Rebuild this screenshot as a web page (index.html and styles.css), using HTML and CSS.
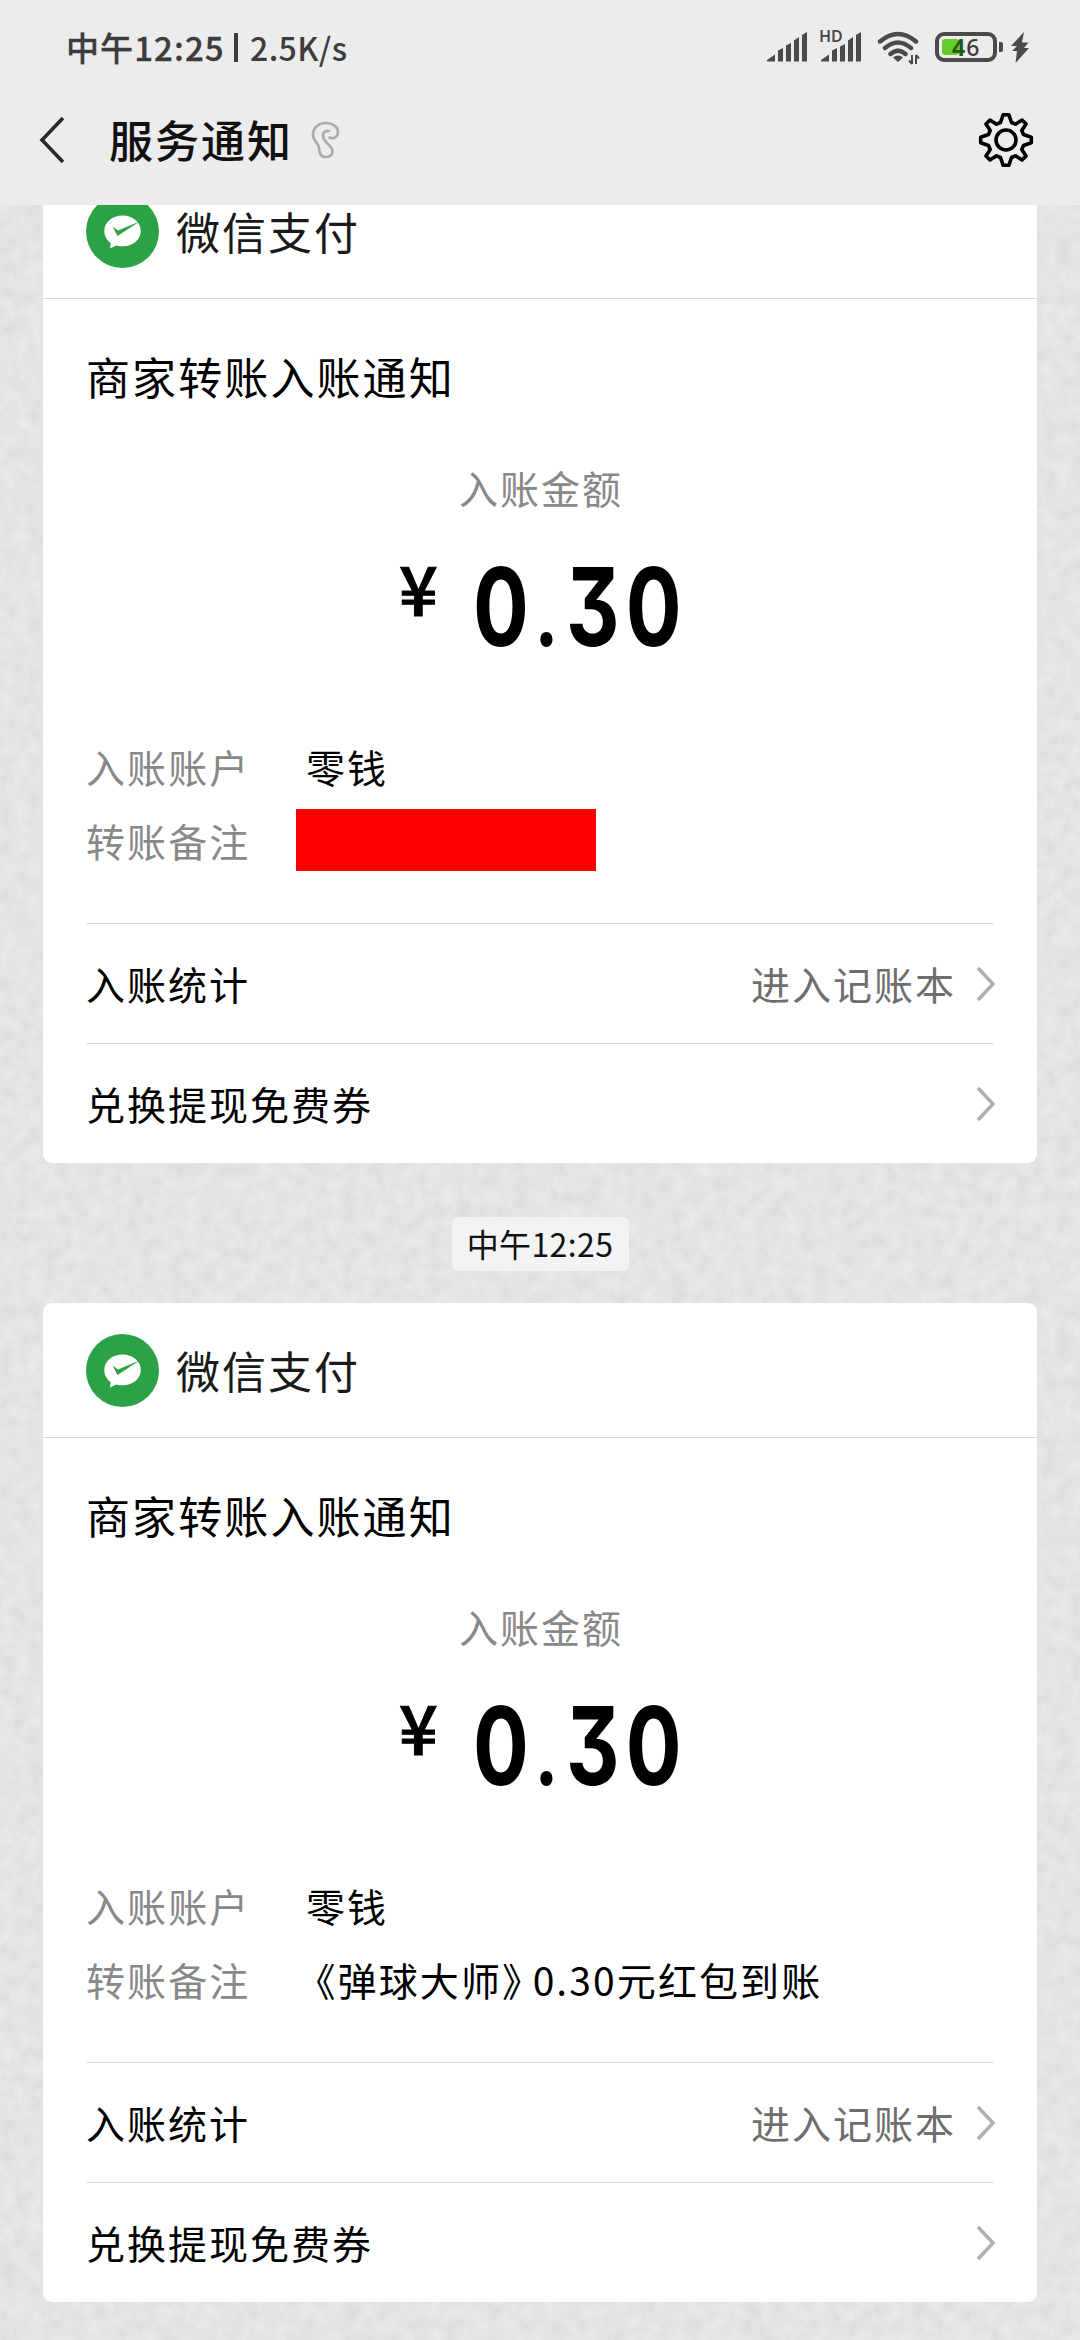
FILE: index.html
```html
<!DOCTYPE html>
<html lang="zh-CN">
<head>
<meta charset="utf-8">
<title>服务通知</title>
<link rel="stylesheet" href="styles.css">
</head>
<body>
<svg class="defs" width="0" height="0">
  <symbol id="pay" viewBox="0 0 73 73">
    <circle cx="36.500" cy="36.500" r="36.500" fill="#2ba245"/>
    <path d="M36.500 20.500c10.200 0 18.300 6.800 18.300 15.400s-8.100 15.400-18.300 15.400c-2.200 0-4.400-.3-6.300-.9L24 53.500l.7-5.600c-4-2.800-6.400-7-6.400-12 0-8.600 8-15.400 18.200-15.400z" fill="#fff"/>
    <path d="M26.500 31.500l5.500 4 21.500-9L31.500 41z" fill="#2ba245"/>
  </symbol>
  <symbol id="chevron" viewBox="0 0 20 36">
    <path d="M2 2l15 16L2 34" fill="none" stroke="#b0b0b0" stroke-width="3.600"/>
  </symbol>
  <symbol id="signal" viewBox="0 0 41 30">
    <path d="M0 29.500V28l8-5.500v7zM11 18.500l5-2.500v13.500h-5zM19 13.500l5-2.500v18.500h-5zM27 8.500L32 5v24.500h-5zM35 3l5-3v29.500h-5z"/>
  </symbol>
</svg>
<div class="screen">
  <header class="top">
    <div class="status">
      <span class="status-time">中午12:25</span><span class="status-bar"></span><span class="status-net">2.5K/s</span>
      <div class="status-icons">
        <svg class="sig" width="41" height="30"><use href="#signal"/></svg>
        <div class="sig-hd"><span class="hd">HD</span><svg width="41" height="30" viewBox="0 0 41 30"><path d="M0 29.500V28l8-5.500v7zM11 18.500l5-2.500v13.500h-5zM19 14.500l5-2.500v17.500h-5zM27 8.500L32 5v24.500h-5zM35 3l5-3v29.500h-5z"/></svg></div>
        <svg class="wifi" width="44" height="34" viewBox="0 0 44 34">
          <g fill="none" stroke="#4a4a4a" stroke-width="4.400" stroke-linecap="round"><path d="M3 10.500q18-15 36 0M8 17q13-11 26 0M13.500 23q7.500-6.500 15 0"/></g>
          <path d="M21 31l-5-4.500q5-4 10 0z"/>
          <path d="M35 24v9M35 33l-3-3.500M39 33v-9M39 24l3 3.500" fill="none" stroke="#4a4a4a" stroke-width="2"/>
        </svg>
        <div class="battery"><div class="shell"><i class="charge"></i><b><span class="on-charge">4</span>6</b></div><i class="nub"></i></div>
        <svg class="bolt" width="18" height="31" viewBox="0 0 18 31"><path d="M13 0L0 14h6l-5 5h5L4.500 31 18 16h-5l4.500-5.500H11z"/></svg>
      </div>
    </div>
    <nav class="nav">
      <svg class="back" width="28" height="48" viewBox="0 0 28 48"><path d="M25 2L4 24l21 22" fill="none" stroke="#2a2a2a" stroke-width="3.600"/></svg>
      <h1>服务通知</h1>
      <svg class="ear" width="30" height="38" viewBox="0 0 30 38"><path d="M18.500 16.500c4 2 8.500-.5 8.500-5.500C27 5.500 21.500 2 15 2 7.500 2 2 7 2 13.500c0 5 2.500 7 4.500 9.500s1.500 5 2 7.500c.6 3.500 3 5.500 6.500 5.500 4.500 0 7-3 6.500-6.500-.4-3-2.500-4.500-5-7s-4.500-4.500-4.500-8 2.500-5 6-4.500" fill="none" stroke="#aaa" stroke-width="2.600" stroke-linecap="round"/></svg>
      <svg class="gear" width="56" height="56" viewBox="-28 -28 56 56"><g fill="none" stroke="#000" stroke-width="3.600" stroke-linejoin="round"><circle r="10"/><path d="M-2.800 -25.300H2.800L5.500 -17.500L9.500 -15.800L16 -20L20 -16L15.800 -9.500L17.500 -5.500L25.300 -2.800V2.800L17.500 5.500L15.800 9.500L20 16L16 20L9.500 15.800L5.500 17.500L2.800 25.300H-2.800L-5.500 17.500L-9.500 15.800L-16 20L-20 16L-15.800 9.500L-17.500 5.500L-25.300 2.800V-2.800L-17.500 -5.500L-15.800 -9.500L-20 -16L-16 -20L-9.500 -15.800L-5.500 -17.500Z"/></g></svg>
    </nav>
  </header>
  <main class="chat">
    <svg class="paper" width="1080" height="2135"><filter id="grain" x="0" y="0" width="100%" height="100%" color-interpolation-filters="sRGB"><feTurbulence type="fractalNoise" baseFrequency="0.07" numOctaves="3" seed="4"/><feColorMatrix values="0.07 0 0 0 0.857  0.07 0 0 0 0.857  0.07 0 0 0 0.857  0 0 0 0 1"/></filter><rect width="1080" height="2135" filter="url(#grain)"/></svg>
    <section class="card card-first">
      <div class="card-head"><svg width="73" height="73"><use href="#pay"/></svg><span>微信支付</span></div>
      <div class="card-body">
        <h2>商家转账入账通知</h2>
        <div class="label">入账金额</div>
        <div class="amount"><span class="yen">¥</span><span class="num">0<span class="point">.</span>30</span></div>
        <dl>
          <div class="field"><dt>入账账户</dt><dd>零钱</dd></div>
          <div class="field"><dt>转账备注</dt><dd class="mask"></dd></div>
        </dl>
        <div class="link"><span>入账统计</span><em>进入记账本</em><svg width="20" height="36"><use href="#chevron"/></svg></div>
        <div class="link"><span>兑换提现免费券</span><svg width="20" height="36"><use href="#chevron"/></svg></div>
      </div>
    </section>
    <time class="stamp">中午12:25</time>
    <section class="card">
      <div class="card-head"><svg width="73" height="73"><use href="#pay"/></svg><span>微信支付</span></div>
      <div class="card-body">
        <h2>商家转账入账通知</h2>
        <div class="label">入账金额</div>
        <div class="amount"><span class="yen">¥</span><span class="num">0<span class="point">.</span>30</span></div>
        <dl>
          <div class="field"><dt>入账账户</dt><dd>零钱</dd></div>
          <div class="field"><dt>转账备注</dt><dd><span class="book-open">《</span>弹球大师<span class="book-close">》</span>0.30元红包到账</dd></div>
        </dl>
        <div class="link"><span>入账统计</span><em>进入记账本</em><svg width="20" height="36"><use href="#chevron"/></svg></div>
        <div class="link"><span>兑换提现免费券</span><svg width="20" height="36"><use href="#chevron"/></svg></div>
      </div>
    </section>
  </main>
</div>
</body>
</html>
```
FILE: styles.css
```css
* { box-sizing: border-box; margin: 0; padding: 0; }
body { width: 1080px; height: 2340px; overflow: hidden; background: #e3e3e3; font-family: "Noto Sans CJK SC", sans-serif; color: #000; }
svg { display: block; flex: none; }
.defs { position: absolute; }
.screen { height: 2340px; display: flex; flex-direction: column; }

.top { height: 205px; flex: none; background: #ececec; }
.status { height: 94px; padding: 0 51px 0 66px; display: flex; align-items: center; color: #3c3c3c; font-size: 33px; font-weight: 500; line-height: 48px; }
.status-time { width: 158px; white-space: nowrap; letter-spacing: 1.1px; -webkit-text-stroke: .3px #3c3c3c; }
.status-bar { width: 4px; height: 29px; margin: 0 12px 0 10px; background: #3c3c3c; }
.status-net { font-size: 32px; letter-spacing: .4px; }
.status-icons { margin-left: auto; display: flex; align-items: center; fill: #4a4a4a; }
.sig-hd { position: relative; margin-left: 13px; }
.hd { position: absolute; left: -2px; top: -2px; font: 600 16px/13px "Noto Sans", sans-serif; color: #4a4a4a; }
.wifi { margin: 2px 0 0 15px; }
.battery { display: flex; align-items: center; margin-left: 14px; }
.shell { position: relative; width: 62px; height: 30px; border: 4px solid #4a4a4a; border-radius: 9px; }
.charge { position: absolute; left: 3px; top: 3px; width: 17px; height: 16px; border-radius: 3px; background: #64cb2c; }
.shell b { position: absolute; left: 13px; top: 0; font: 500 23px/22px "Noto Sans", sans-serif; letter-spacing: 1px; color: #3c3c3c; }
.on-charge { font-weight: 700; color: #1f5a10; }
.nub { width: 4px; height: 10px; margin-left: 2px; border-radius: 0 2px 2px 0; background: #4a4a4a; }
.bolt { margin-left: 8px; }

.nav { height: 92px; padding: 0 46px 0 38px; display: flex; align-items: center; }
.nav h1 { margin: -2px 0 0 43px; font-size: 44px; font-weight: 500; line-height: 60px; letter-spacing: 2px; color: #111; }
.ear { margin-left: 18px; }
.gear { margin-left: auto; }

.chat { position: relative; flex: 1; overflow: hidden; display: flex; flex-direction: column; align-items: center; }
.paper { position: absolute; left: 0; top: 0; }
.card { position: relative; width: 994px; height: 999px; flex: none; border-radius: 9px; background: #fff; }
.card-first { margin-top: -41px; }
.card-head { height: 135px; padding: 1px 43px 0; display: flex; align-items: center; border-bottom: 1px solid #dadada; font-size: 44px; letter-spacing: 2px; color: #1a1a1a; }
.card-head span { margin: -2px 0 0 17px; line-height: 60px; }
.card-body { padding: 0 43px; }
h2 { margin-top: 47px; font-size: 44px; font-weight: 400; line-height: 60px; letter-spacing: 2.1px; }
.label { margin-top: 57px; padding-left: 2px; text-align: center; font-size: 39px; line-height: 48px; letter-spacing: 2px; color: #888; }
.amount { height: 118px; margin-top: 36px; padding-left: 313px; display: flex; align-items: flex-start; }
.yen { width: 74px; font: 500 68px/79px "Noto Sans CJK SC", sans-serif; -webkit-text-stroke: 1px #000; }
.num { font: 650 109px/118px Inter, sans-serif; font-feature-settings: "cv09"; letter-spacing: 8px; transform: scaleX(.76); transform-origin: left; white-space: nowrap; }
.point { font-family: Roboto, sans-serif; margin-right: 2px; }
dl { padding: 64px 0 46px; }
.field { display: flex; height: 74px; align-items: center; font-size: 39px; line-height: 48px; letter-spacing: 2.1px; }
dt { width: 220px; color: #888; }
.mask { width: 300px; height: 62px; margin-left: -10px; background: red; }
.book-open { margin-left: 10px; font-feature-settings: "halt"; }
.book-close { margin-right: 9px; font-feature-settings: "halt"; }
.link { height: 120px; display: flex; align-items: center; border-top: 1px solid #dadada; font-size: 39px; letter-spacing: 2px; }
.link span, .link em { margin-top: -2px; }
.link span { margin-right: auto; }
.link em { margin-right: 20px; font-style: normal; color: #6e6e6e; }
.link svg { margin-right: -2px; }
.stamp { position: relative; width: 177px; height: 54px; margin: 54px 0 32px; flex: none; border-radius: 6px; background: #f3f3f3; text-align: center; font-size: 32px; line-height: 53px; letter-spacing: .4px; color: #111; }
```
